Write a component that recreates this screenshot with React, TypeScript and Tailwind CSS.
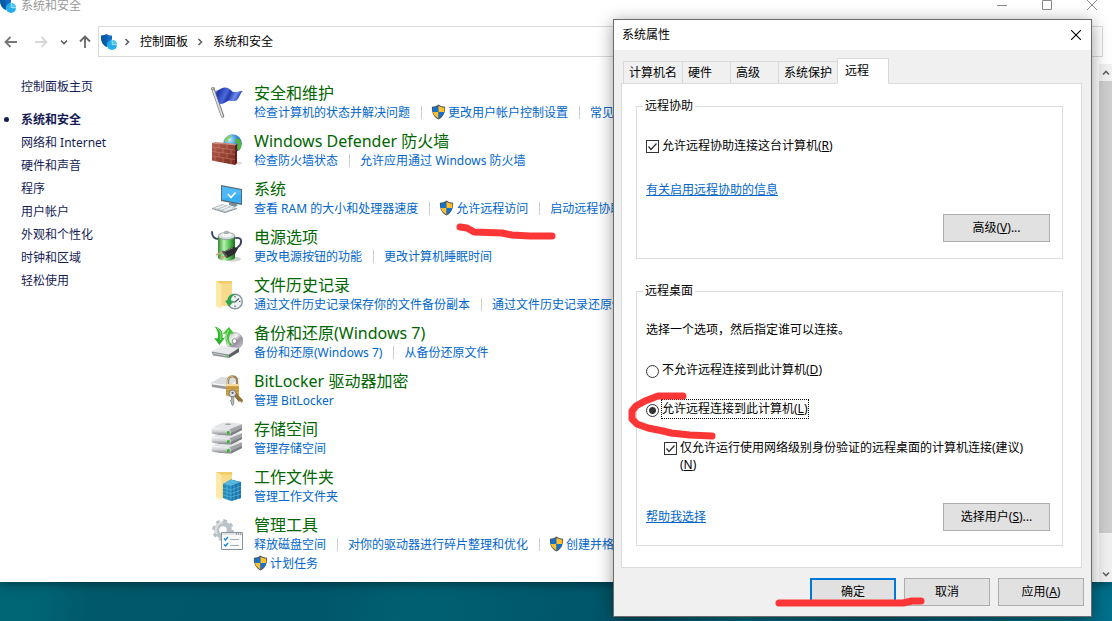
import { useState, type ReactNode } from 'react';
import clsx from 'clsx';

type TaskLink = { text: string; shield?: boolean };
type Category = { title: string; icon: ReactNode; rows: TaskLink[][] };

const SHIELD = 'M8 0 C10 1.6 12.6 2.4 15 2.4 C15.4 8.5 13.5 13 8 16 C2.5 13 0.6 8.5 1 2.4 C3.4 2.4 6 1.6 8 0Z';

function UacShield() {
  return (
    <svg viewBox="0 0 16 16" className="-mt-px h-4 w-[15px] shrink-0" aria-hidden="true">
      <path d={SHIELD} fill="#4b5258" />
      <path d="M8 1.3V8H2C1.8 6.4 1.8 5 1.9 3.3C4.2 3.1 6.3 2.5 8 1.3Z" fill="#1673c9" />
      <path d="M8 1.3V8H14C14.2 6.4 14.2 5 14.1 3.3C11.8 3.1 9.7 2.5 8 1.3Z" fill="#ffc02e" />
      <path d="M2 8H8V14.8C4.5 12.9 2.6 10.8 2 8Z" fill="#ffc02e" />
      <path d="M14 8H8V14.8C11.5 12.9 13.4 10.8 14 8Z" fill="#1673c9" />
    </svg>
  );
}

function SecurityIcon() {
  return (
    <svg viewBox="0 0 16 16" className="h-4 w-4 shrink-0" aria-hidden="true">
      <path d="M5.5 0C7 1 9 1.7 11 1.7C11.3 7 9.8 10.5 5.5 13C1.3 10.5 -0.3 7 0 1.7C2 1.7 4 1 5.5 0Z" fill="#0f6cc0" />
      <path d="M5.5 0V13C1.3 10.5 -0.3 7 0 1.7C2 1.7 4 1 5.5 0Z" fill="#0a5aa8" />
      <circle cx="11" cy="11" r="5" fill="#22aeea" />
      <path d="M11.6 10.2V6.2A4.6 4.6 0 0 1 15.8 10.2Z" fill="#4cc5f5" />
      <path d="M11.2 5.8V10.7H16" fill="none" stroke="#e8f8ff" strokeWidth="0.7" />
    </svg>
  );
}

function Icon({ children }: { children: ReactNode }) {
  return (
    <svg viewBox="0 0 32 32" className="mt-[3px] h-8 w-8 shrink-0" aria-hidden="true">
      {children}
    </svg>
  );
}

const flagIcon = (
  <Icon>
    <defs>
      <linearGradient id="flag" x1="0" y1="0" x2="1" y2="0.3">
        <stop offset="0" stopColor="#aab8f2" />
        <stop offset="0.18" stopColor="#1f35a6" />
        <stop offset="0.45" stopColor="#4a69dc" />
        <stop offset="0.6" stopColor="#2239ab" />
        <stop offset="0.8" stopColor="#6d8af0" />
        <stop offset="1" stopColor="#1c36ac" />
      </linearGradient>
    </defs>
    <path d="M2 3L11.5 30" stroke="#777" strokeWidth="3.4" strokeLinecap="round" />
    <path d="M1.8 3L11.3 30" stroke="#dedede" strokeWidth="1.8" strokeLinecap="round" />
    <path d="M4 5C8 5 9 2 14 1.5C20 1.5 20 7 25 6C28 5.5 30 5 32 5C29 7 29 11 26 14C23 16.5 19 13 15 16C12 18 10 18 8.5 18Z" fill="url(#flag)" />
    <circle cx="2" cy="2.5" r="1.8" fill="#8f8f8f" />
    <circle cx="1.7" cy="2.2" r="0.8" fill="#d8d8d8" />
  </Icon>
);

const firewallIcon = (
  <Icon>
    <defs>
      <radialGradient id="globe" cx="0.35" cy="0.3" r="0.8">
        <stop offset="0" stopColor="#c6edfc" />
        <stop offset="0.5" stopColor="#2c8fdc" />
        <stop offset="1" stopColor="#0b489e" />
      </radialGradient>
      <linearGradient id="wall" x1="0" y1="0" x2="1" y2="1">
        <stop offset="0" stopColor="#b6614e" />
        <stop offset="1" stopColor="#78281b" />
      </linearGradient>
    </defs>
    <ellipse cx="26" cy="29" rx="5" ry="1.5" fill="#d9d9d9" />
    <circle cx="21.5" cy="9.5" r="9.3" fill="url(#globe)" />
    <path d="M14 5C16 2 19 1 21 1L19 4L17 5L16 8H13.500Z" fill="#8ccf5c" />
    <path d="M25 4L29.5 6C31 10 30.5 14 28 17L26 14L27 10L24 8Z" fill="#57b43b" />
    <path d="M1 9L4 8L26 10L24 12Z" fill="#cf8c7a" />
    <path d="M1 9L24 11.5V31L1 26.5Z" fill="url(#wall)" />
    <path d="M24 11.5L26 10V29L24 31Z" fill="#5f1f15" />
    <path d="M1 13L24 16M1 17.5L24 20.5M1 22L24 25.5M8 10V14M16 11V15M4 13.5V18M12 14.5V19M20 15.5V20M8 18.5V23M16 19.5V24M4 22.5V27M12 24V28.5M20 25V30" stroke="#cd8a79" strokeWidth="0.5" />
  </Icon>
);

const systemIcon = (
  <Icon>
    <path d="M1 26L11 22L26 26L14 30Z" fill="#b7c0c6" />
    <path d="M3.5 26L12 23L14.5 23.6L6 26.7ZM8 27L16 24L18.5 24.6L10.5 27.7ZM12 28L20 25L23.5 26L14 29Z" fill="#eef2f4" />
    <path d="M1 26L14 30L26 26V27L14 31L1 27Z" fill="#84919a" />
    <path d="M18 21L22 20L27 23L24 25L18 23Z" fill="#7f8e98" />
    <path d="M10 3L31 7V23L10 19Z" fill="#566a76" />
    <path d="M11 4.5L30 8V21.5L11 17.8Z" fill="#38aef4" />
    <path d="M11 4.5L30 8V12L11 17Z" fill="#65c3fa" opacity="0.5" />
    <path d="M17 12L20 15.5L24.5 10.5" fill="none" stroke="#fff" strokeWidth="1.5" />
  </Icon>
);

const powerIcon = (
  <Icon>
    <defs>
      <linearGradient id="battery">
        <stop offset="0" stopColor="#2d8a31" />
        <stop offset="0.35" stopColor="#b9f2ae" />
        <stop offset="0.7" stopColor="#50b84d" />
        <stop offset="1" stopColor="#1d6b22" />
      </linearGradient>
    </defs>
    <ellipse cx="22" cy="29" rx="8" ry="2.5" fill="#d2d2d2" />
    <path d="M1 2C1 7 3 9 8 9M25 8C32 7 31 14 27 17C24 19 26 22 21 24" fill="none" stroke="#3b4560" strokeWidth="1.9" strokeLinecap="round" />
    <path d="M7 6V28C9 31.5 22 31.5 24 28V6Z" fill="url(#battery)" />
    <ellipse cx="15.5" cy="6" rx="8.5" ry="3.5" fill="#d5dedb" stroke="#87928d" strokeWidth="0.8" />
    <ellipse cx="15.5" cy="5" rx="5.5" ry="2" fill="#f4f8f7" />
    <path d="M13 4V1.5C14 0.5 17 0.5 18 1.5V4Z" fill="#aab5b1" />
    <path d="M12 22L22 17L27 18L24 24L16 28Z" fill="#2c2c2c" />
    <path d="M5 25L12 21.5M9 28.5L16 25.5" stroke="#c9a878" strokeWidth="1.8" />
    <path d="M11.5 21L16 27.5" stroke="#5b5b5b" strokeWidth="2" />
    <path d="M14 21.5L22 17.8" stroke="#8a8a8a" strokeWidth="0.8" />
  </Icon>
);

const historyIcon = (
  <Icon>
    <path d="M5 3H21V28H8Z" fill="#f0cb6a" />
    <path d="M10 5.5H21V28H10Z" fill="#f6db8a" />
    <path d="M5 3L10.5 6V31L5 28Z" fill="#ffe9a8" />
    <circle cx="24" cy="23.5" r="7.3" fill="#eef1f2" stroke="#87949b" strokeWidth="1.4" />
    <path d="M24 18V19.5M29.5 23.5H28M24 29V27.5M24 24L28 20.5M24 24H20" stroke="#46535b" strokeWidth="1.1" />
    <path d="M14 23L17 22C17 18 20 15.5 25 16C21 18 20 20 20 22.5L22.5 23L18.5 28.5Z" fill="#2aa34a" />
  </Icon>
);

const backupIcon = (
  <Icon>
    <defs>
      <linearGradient id="disc" x1="0" y1="0" x2="1" y2="1">
        <stop offset="0" stopColor="#a7abae" />
        <stop offset="0.4" stopColor="#f2f2f2" />
        <stop offset="0.6" stopColor="#9a90a4" />
        <stop offset="1" stopColor="#d2d5d7" />
      </linearGradient>
    </defs>
    <circle cx="23.5" cy="15" r="8.5" fill="url(#disc)" stroke="#8a8d90" strokeWidth="0.5" />
    <circle cx="23.5" cy="15" r="2.3" fill="#fff" stroke="#777" strokeWidth="0.8" />
    <path d="M0.5 25.5L10 20L28 22L18 28.5Z" fill="#e9eaeb" />
    <path d="M0.5 25.5L18 28.5V32L2 29.5Z" fill="#8f9296" />
    <path d="M2 27L15 29.2V30.2L2 28Z" fill="#c9cbcd" />
    <path d="M18 28.5L28 22V26L18 32Z" fill="#5c5f63" />
    <circle cx="15.5" cy="30" r="1.1" fill="#45dc3c" />
    <path d="M3.5 0.5C10 2 12.5 6 11.5 12L14 11.5L8.5 19L3 12L6.5 12.5C8 8 6.5 4 3.5 0.5Z" fill="#2eb32b" />
    <path d="M20 20C14.5 17 13.5 12 15 7.5L11.5 8L18 1L23 7.5L19.5 7.5C17 11 17.5 16 21 18.5Z" fill="#43c439" />
    <path d="M6 2C10 5 10.5 9 9.5 14M17.5 4C14.5 10 15 14 18 18" fill="none" stroke="#a8ee93" strokeWidth="0.9" />
  </Icon>
);

const bitlockerIcon = (
  <Icon>
    <path d="M0.5 8.5L10 3L29 4L20 11Z" fill="#dcdddf" />
    <path d="M0.5 8.5L20 11V16L1 13Z" fill="#96989b" />
    <path d="M0.5 8.5L20 11V13L1 10.5Z" fill="#f4f4f4" />
    <path d="M17 11V6.5C17 1 26 1 26 6.5V11" fill="none" stroke="#9b8250" strokeWidth="2.4" />
    <path d="M16.7 10V6.5C17.5 2.5 20 2 22 2.3" fill="none" stroke="#e4d5a6" strokeWidth="0.9" />
    <path d="M15 10H28V22C24 23 19 23 15 21.5Z" fill="#d3a548" />
    <path d="M15 10H28V12H15Z" fill="#f3dc9c" />
    <path d="M15 14H28M15 17H28M15 20H28" stroke="#b4872f" strokeWidth="0.8" />
    <path d="M25 19L32 26L31 29L29 27L28 28L23 22Z" fill="#927136" />
    <circle cx="21.5" cy="19.5" r="3.5" fill="#dcdee0" stroke="#6d7276" strokeWidth="0.9" />
    <circle cx="21.5" cy="18.8" r="1.1" fill="#555a5e" />
    <path d="M20.5 22.8H22.8V30L21.5 31.5L20.5 30V28L19 27L20.5 26Z" fill="#b4b8bb" stroke="#686c70" strokeWidth="0.6" />
  </Icon>
);

const storageIcon = (
  <Icon>
    <defs>
      <linearGradient id="drive" x1="0" y1="0" x2="0" y2="1">
        <stop offset="0" stopColor="#fafafa" />
        <stop offset="0.5" stopColor="#cfd1d4" />
        <stop offset="1" stopColor="#7f8286" />
      </linearGradient>
    </defs>
    {[18, 9, 0].map((y) => (
      <g key={y} transform={`translate(0 ${y})`}>
        <path d="M1 6L10 1.2C15 0 26 0.5 31 2.5L20 8Z" fill="#e4e5e7" />
        <path d="M0.5 7C0.5 5 2 5.5 6 6.2L18 7.5C19.5 8 20 9 20 13.5C12 13.5 4 12.5 1 11.5Z" fill="url(#drive)" />
        <path d="M18 7.5L31 2.2V8L20 13.5C20 10 20 8.5 18 7.5Z" fill="#a2a4a7" />
        <path d="M20 11L31 6V8L20 13.5Z" fill="#7b7e81" />
        <path d="M16 9.5L18.5 8.8V12L16 12.5Z" fill="#34b62b" />
      </g>
    ))}
    <ellipse cx="17" cy="2.3" rx="3" ry="0.7" fill="#9a9c9f" />
  </Icon>
);

const workFoldersIcon = (
  <Icon>
    <path d="M5 2H21V27H8Z" fill="#f0cb6a" />
    <path d="M10 4.5H21V28H10Z" fill="#f6db8a" />
    <path d="M5 2L10.5 5V30L5 27Z" fill="#ffe9a8" />
    <path d="M12 14L20 9.5L30 12V28L20 31L12 28Z" fill="#2289bd" />
    <path d="M12 14L20 9.5L30 12L20 16Z" fill="#58b5dc" />
    <path d="M20 16L30 12V28L20 31Z" fill="#1874a9" />
    <path d="M12 18L20 20L30 16M12 21.5L20 23.5L30 20M12 25L20 27L30 24M16 15V29.5M23 15V30M27 13.5V29M20 16V31" fill="none" stroke="#62bfe4" strokeWidth="0.6" />
  </Icon>
);

const toolsIcon = (
  <Icon>
    <circle cx="12" cy="12" r="9.3" fill="none" stroke="#b4bdc3" strokeWidth="3" strokeDasharray="3.65 3.65" />
    <circle cx="12" cy="12" r="6.3" fill="none" stroke="#b9c2c8" strokeWidth="5" />
    <path d="M6 16A7.5 7.5 0 0 1 12 4.5" fill="none" stroke="#d9dfe3" strokeWidth="2" />
    <path d="M10.5 14.5H31.5V31.5H10.5Z" fill="#fafafa" stroke="#87929a" />
    <path d="M11 15H31V17H11Z" fill="#dfe4e7" />
    <path d="M25 16H26M27 16H28M29 16H30" stroke="#58636b" strokeWidth="1" />
    <path d="M13 20.5L14.5 22L17 19M13 26.5L14.5 28L17 25" fill="none" stroke="#1782d8" strokeWidth="1.4" />
    <path d="M19 21.5H28M19 27.5H28" stroke="#a4adb3" strokeWidth="1" />
  </Icon>
);

const categories: Category[] = [
  {
    title: '安全和维护',
    icon: flagIcon,
    rows: [[{ text: '检查计算机的状态并解决问题' }, { text: '更改用户帐户控制设置', shield: true }, { text: '常见问题' }]],
  },
  {
    title: 'Windows Defender 防火墙',
    icon: firewallIcon,
    rows: [[{ text: '检查防火墙状态' }, { text: '允许应用通过 Windows 防火墙' }]],
  },
  {
    title: '系统',
    icon: systemIcon,
    rows: [[{ text: '查看 RAM 的大小和处理器速度' }, { text: '允许远程访问', shield: true }, { text: '启动远程协助' }]],
  },
  {
    title: '电源选项',
    icon: powerIcon,
    rows: [[{ text: '更改电源按钮的功能' }, { text: '更改计算机睡眠时间' }]],
  },
  {
    title: '文件历史记录',
    icon: historyIcon,
    rows: [[{ text: '通过文件历史记录保存你的文件备份副本' }, { text: '通过文件历史记录还原你的文件' }]],
  },
  {
    title: '备份和还原(Windows 7)',
    icon: backupIcon,
    rows: [[{ text: '备份和还原(Windows 7)' }, { text: '从备份还原文件' }]],
  },
  { title: 'BitLocker 驱动器加密', icon: bitlockerIcon, rows: [[{ text: '管理 BitLocker' }]] },
  { title: '存储空间', icon: storageIcon, rows: [[{ text: '管理存储空间' }]] },
  { title: '工作文件夹', icon: workFoldersIcon, rows: [[{ text: '管理工作文件夹' }]] },
  {
    title: '管理工具',
    icon: toolsIcon,
    rows: [
      [{ text: '释放磁盘空间' }, { text: '对你的驱动器进行碎片整理和优化' }, { text: '创建并格式化硬盘分区', shield: true }],
      [{ text: '计划任务', shield: true }],
    ],
  },
];

const sideLinks = ['系统和安全', '网络和 Internet', '硬件和声音', '程序', '用户帐户', '外观和个性化', '时钟和区域', '轻松使用'];

function Chevron({ className }: { className?: string }) {
  return (
    <svg viewBox="0 0 8 8" className={clsx('h-2 w-2 shrink-0', className)} fill="none" stroke="#606060" strokeWidth="1.6" aria-hidden="true">
      <path d="M2.5 1L5.5 4L2.5 7" />
    </svg>
  );
}

function ArrowIcon({ className }: { className?: string }) {
  return (
    <svg viewBox="0 0 14 12" className={clsx('h-3 w-3.5', className)} fill="none" stroke="currentColor" strokeWidth="1.8" aria-hidden="true">
      <path d="M13 6H1.5M6.5 1L1.5 6L6.5 11" />
    </svg>
  );
}

function ControlPanel() {
  return (
    <div className="overflow-hidden bg-white shadow-[0_1px_10px_rgba(0,0,0,0.5)]">
      <header className="flex h-[26px] items-start justify-between pr-[15px]">
        <div className="flex items-start gap-[5px] text-[#999]">
          <div className="-mt-[3px]">
            <SecurityIcon />
          </div>
          <span className="leading-3">系统和安全</span>
        </div>
        <div className="flex gap-[35px] text-[#8a8a8a]">
          <button aria-label="最小化">
            <svg viewBox="0 0 10 10" className="h-2.5 w-2.5" stroke="currentColor"><path d="M0 5.5H10" /></svg>
          </button>
          <button aria-label="最大化">
            <svg viewBox="0 0 10 10" className="h-2.5 w-2.5" fill="none" stroke="currentColor"><path d="M0.5 0.5H9.5V9.5H0.5Z" /></svg>
          </button>
          <button aria-label="关闭">
            <svg viewBox="0 0 10 10" className="h-2.5 w-2.5" fill="none" stroke="currentColor"><path d="M0 0L10 10M10 0L0 10" /></svg>
          </button>
        </div>
      </header>

      <div className="flex items-center pr-[9px] pl-1">
        <button aria-label="后退" className="text-[#777]"><ArrowIcon /></button>
        <button aria-label="前进" className="ml-4 text-[#d6d6d6]"><ArrowIcon className="rotate-180" /></button>
        <button aria-label="最近" className="ml-3"><Chevron className="rotate-90" /></button>
        <button aria-label="上移" className="ml-[10px] text-[#666]"><ArrowIcon className="rotate-90" /></button>
        <nav className="ml-[6px] flex h-[31px] flex-1 items-center border border-[#d9d9d9] pl-[2px]">
          <SecurityIcon />
          <Chevron className="ml-[6px]" />
          <a href="#" className="ml-[9px]">控制面板</a>
          <Chevron className="ml-2" />
          <a href="#" className="ml-[9px]">系统和安全</a>
        </nav>
      </div>

      <div className="flex pt-[7px]">
        <aside className="w-[211px] shrink-0 pt-[13px] pl-[21px] text-[#151c55]">
          <a href="#" className="block leading-[19px]">控制面板主页</a>
          <ul className="mt-3">
            {sideLinks.map((text, i) => (
              <li key={text} className={clsx('relative leading-[23px]', i === 0 && 'font-bold')}>
                {i === 0 && <span className="absolute top-[9px] -left-[17px] h-[5px] w-[5px] rounded-full bg-[#151c55]" />}
                <a href="#">{text}</a>
              </li>
            ))}
          </ul>
        </aside>

        <main className="flex min-w-0 flex-1 flex-col gap-[9px] overflow-hidden pt-[19px] pb-[9px]">
          {categories.map((c) => (
            <section key={c.title} className="flex gap-[11px] whitespace-nowrap">
              {c.icon}
              <div>
                <h2 className="text-base leading-5 text-[#006600]"><a href="#">{c.title}</a></h2>
                {c.rows.map((row, i) => (
                  <ul key={i} className="flex h-[19px] items-center">
                    {row.map((link, j) => (
                      <li key={link.text} className="flex items-center">
                        {j > 0 && <span className="mr-2.5 ml-[11px] h-[13px] w-px bg-[#ccc]" />}
                        <a href="#" className={clsx('flex items-center gap-[2px] text-[#0066cc]', link.shield && '-ml-px')}>
                          {link.shield && <UacShield />}
                          {link.text}
                        </a>
                      </li>
                    ))}
                  </ul>
                ))}
              </div>
            </section>
          ))}
        </main>

        <div className="flex w-[13px] shrink-0 flex-col overflow-hidden bg-[#f0f0f0]">
          <button aria-label="向上滚动" className="flex h-[17px] items-center justify-center">
            <Chevron className="-rotate-90" />
          </button>
          <div className="flex-[452] bg-[#cdcdcd]" />
          <div className="flex-[32]" />
          <button aria-label="向下滚动" className="flex h-[17px] items-center justify-center">
            <Chevron className="rotate-90" />
          </button>
        </div>
      </div>
    </div>
  );
}

function CheckBox({ id, defaultChecked }: { id: string; defaultChecked?: boolean }) {
  return (
    <span className="relative h-[13px] w-[13px] shrink-0">
      <input id={id} type="checkbox" defaultChecked={defaultChecked} className="peer block h-[13px] w-[13px] appearance-none border border-[#333] bg-white" />
      <svg viewBox="0 0 13 13" className="pointer-events-none absolute inset-0 hidden h-[13px] w-[13px] peer-checked:block" fill="none" stroke="#333" strokeWidth="1.3">
        <path d="M2.5 6.5L5 9.5L10.5 3.5" />
      </svg>
    </span>
  );
}

function Radio({ id, checked, onChange }: { id: string; checked: boolean; onChange: () => void }) {
  return (
    <input
      id={id}
      type="radio"
      name="remote-desktop"
      checked={checked}
      onChange={onChange}
      className="mt-[4px] h-[13px] w-[13px] shrink-0 appearance-none rounded-full border border-[#333] bg-white checked:bg-[radial-gradient(circle,#333_3px,#fff_4px)]"
    />
  );
}

function PushButton({ children, className }: { children: ReactNode; className?: string }) {
  return (
    <button className={clsx('h-7 bg-[#e1e1e1] text-center', className ?? 'w-[107px] border border-[#adadad]')}>{children}</button>
  );
}

const tabs = [
  { name: '计算机名', width: 'w-[60px]' },
  { name: '硬件', width: 'w-[49px]' },
  { name: '高级', width: 'w-[49px]' },
  { name: '系统保护', width: 'w-[60px]' },
  { name: '远程', width: 'w-[52px]' },
];

function SystemProperties() {
  const [allowed, setAllowed] = useState(true);

  return (
    <div role="dialog" aria-labelledby="dialog-title" className="absolute top-[19px] left-[613px] w-[479px] border border-[#6b6b6b] bg-[#f0f0f0] text-black shadow-[0_3px_16px_rgba(0,0,0,0.4)]">
      <div className="flex h-[30px] items-center justify-between bg-white pr-[10px] pl-2">
        <h1 id="dialog-title">系统属性</h1>
        <button aria-label="关闭">
          <svg viewBox="0 0 10 10" className="h-2.5 w-2.5" stroke="#000" strokeWidth="1.1"><path d="M0 0L10 10M10 0L0 10" /></svg>
        </button>
      </div>

      <div className="px-[7px] pt-2">
        <div role="tablist" className="flex items-end pl-[2px]">
          {tabs.map((tab, i) => {
            const active = i === tabs.length - 1;
            return (
              <button
                key={tab.name}
                role="tab"
                aria-selected={active}
                className={clsx(
                  'border border-[#d9d9d9] text-left',
                  tab.width,
                  active ? 'relative -mb-px h-[26px] border-b-white bg-white pl-[7px]' : '-mr-px h-[22px] border-b-0 pl-[5px]',
                )}
              >
                {tab.name}
              </button>
            );
          })}
        </div>

        <div className="mr-[2px] border border-[#dcdcdc] bg-white pt-[15px] pr-[18px] pb-[21px] pl-[14px]">
          <fieldset className="border border-[#dcdcdc] pr-3 pb-4 pl-[9px]">
            <legend className="-ml-[3px] px-[2px] leading-[14px]">远程协助</legend>
            <div className="mt-6 flex items-center gap-[3px] leading-[18px]">
              <CheckBox id="assist" defaultChecked />
              <label htmlFor="assist">允许远程协助连接这台计算机(<u>R</u>)</label>
            </div>
            <a href="#" className="mt-[26px] inline-block leading-[18px] text-[#0066cc] underline">有关启用远程协助的信息</a>
            <div className="mt-[15px] flex justify-end">
              <PushButton>高级(<u>V</u>)...</PushButton>
            </div>
          </fieldset>

          <fieldset className="mt-[25px] border border-[#dcdcdc] pr-3 pb-[14px] pl-[9px]">
            <legend className="-ml-[3px] px-[2px] leading-[14px]">远程桌面</legend>
            <p className="mt-[23px] leading-[18px]">选择一个选项，然后指定谁可以连接。</p>
            <div className="mt-[22px] flex items-start gap-[3px] leading-[18px]">
              <Radio id="deny" checked={!allowed} onChange={() => setAllowed(false)} />
              <label htmlFor="deny">不允许远程连接到此计算机(<u>D</u>)</label>
            </div>
            <div className="mt-[21px] flex items-start gap-[3px] leading-[18px]">
              <Radio id="allow" checked={allowed} onChange={() => setAllowed(true)} />
              <label htmlFor="allow" className="outline-1 outline-black outline-dotted">允许远程连接到此计算机(<u>L</u>)</label>
            </div>
            <div className="mt-[21px] ml-[18px] flex items-start gap-[3px] leading-[17px]">
              <div className="pt-[3px]"><CheckBox id="nla" defaultChecked /></div>
              <label htmlFor="nla">仅允许运行使用网络级别身份验证的远程桌面的计算机连接(建议)<br />(<u>N</u>)</label>
            </div>
            <div className="mt-[30px] flex items-center justify-between">
              <a href="#" className="text-[#0066cc] underline">帮助我选择</a>
              <PushButton>选择用户(<u>S</u>)...</PushButton>
            </div>
          </fieldset>
        </div>
      </div>

      <div className="flex justify-end gap-2 pt-[10px] pr-[7px] pb-[10px]">
        <PushButton className="w-[86px] border-2 border-[#0078d7]">确定</PushButton>
        <PushButton className="w-[86px] border border-[#adadad]">取消</PushButton>
        <PushButton className="w-[86px] border border-[#adadad]">应用(<u>A</u>)</PushButton>
      </div>
    </div>
  );
}

// red pen strokes over the steps to follow
function PenMarks() {
  return (
    <svg viewBox="0 0 1112 621" className="pointer-events-none absolute top-0 left-0 h-[621px] w-[1112px]" fill="none" stroke="#fc3636" strokeWidth="7" strokeLinecap="round" strokeLinejoin="round" aria-hidden="true">
      <path d="M460 227L467 228L474 232L502 233L512 235L530 236H552" />
      <path d="M683 396H658L645 401L636 406L632 411V419L637 424L648 428L663 431L671 433L690 435L712 436" />
      <path d="M779 603H903L912 601H921" />
    </svg>
  );
}

export default function App() {
  return (
    <div
      lang="zh-CN"
      className="relative min-h-screen overflow-hidden bg-[#00596b] bg-[linear-gradient(100deg,#006678_0%,#006475_12%,#00596a_16%,#00566a_34%,#006072_43%,#005266_62%,#00687a_70%,#00566b_80%,#00708c_100%)] font-['Noto_Sans','Noto_Sans_CJK_SC',sans-serif] text-[12px] leading-4 text-black"
    >
      <ControlPanel />
      <SystemProperties />
      <PenMarks />
    </div>
  );
}
